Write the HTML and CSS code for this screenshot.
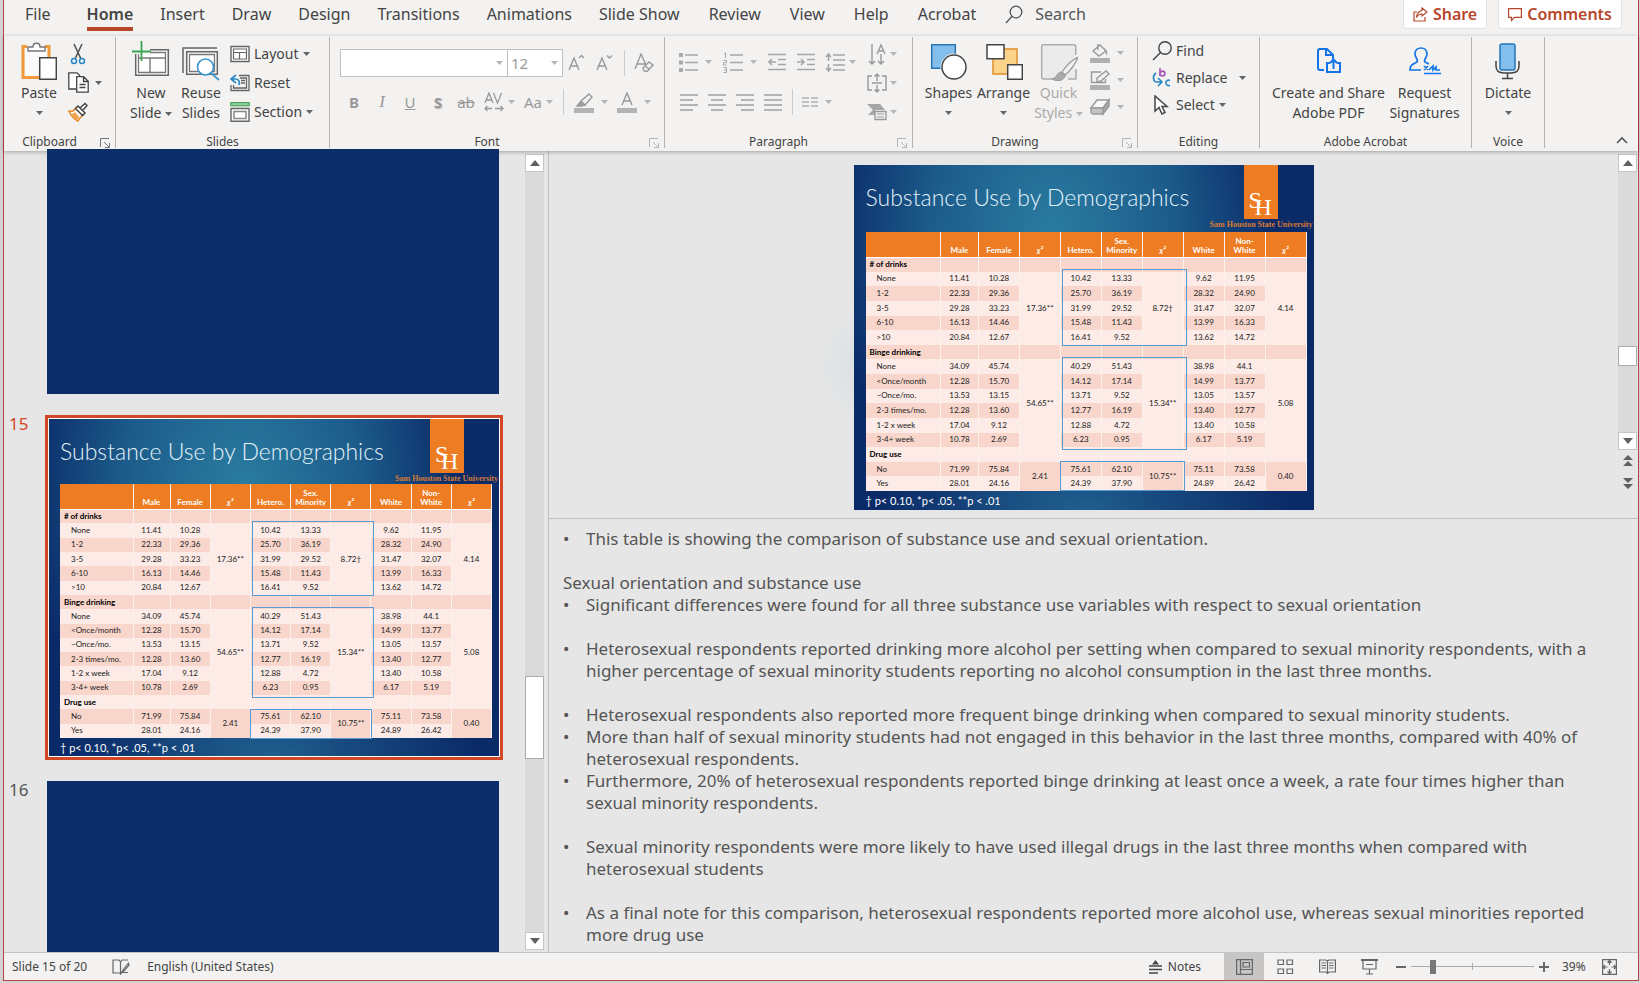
FILE: index.html
```html
<!DOCTYPE html>
<html lang="en">
<head>
<meta charset="utf-8">
<title>Presentation editor</title>
<link rel="stylesheet" href="styles.css">
</head>
<body>
<svg class="defs" aria-hidden="true">
  <symbol id="caret" viewBox="0 0 7 4"><path d="M0 0h7L3.500 4z" fill="currentColor"/></symbol>
  <symbol id="launch" viewBox="0 0 10 10"><path d="M.5 9V.5H9M4 4l5 5M9.500 5v4.500H5" fill="none" stroke="currentColor"/></symbol>
  <symbol id="up" viewBox="0 0 10 6"><path d="M0 6h10L5 0z" fill="#606060"/></symbol>
  <symbol id="down" viewBox="0 0 10 6"><path d="M0 0h10L5 6z" fill="#606060"/></symbol>
</svg>
<div class="app">
  <nav class="tabs">
    <a href="#" class="tab first">File</a>
    <a href="#" class="tab active">Home</a>
    <a href="#" class="tab">Insert</a>
    <a href="#" class="tab">Draw</a>
    <a href="#" class="tab">Design</a>
    <a href="#" class="tab">Transitions</a>
    <a href="#" class="tab">Animations</a>
    <a href="#" class="tab">Slide Show</a>
    <a href="#" class="tab">Review</a>
    <a href="#" class="tab">View</a>
    <a href="#" class="tab">Help</a>
    <a href="#" class="tab">Acrobat</a>
    <button class="search"><svg width="18" height="19" viewBox="0 0 18 19" fill="none" stroke="#555" stroke-width="1.300"><circle cx="11" cy="7" r="5.800"/><path d="M7 11.200L1 18"/></svg>Search</button>
    <span class="grow"></span>
    <button class="pill"><svg width="15" height="15" viewBox="0 0 15 15" fill="none" stroke="#b7472a" stroke-width="1.200"><path d="M4 5H1v9h11v-4M9 1l5 4-5 4V7C6 7 4.500 8.500 3.500 10.500 4 6.500 6 4 9 3.500z"/></svg>Share</button>
    <button class="pill"><svg width="14" height="15" viewBox="0 0 14 15" fill="none" stroke="#b7472a" stroke-width="1.200"><path d="M.6 1.600h12.800v8.800H6.500L3.500 13.500v-3.100H.6z"/></svg>Comments</button>
  </nav>

  <div class="ribbon">
    <section class="group g-clip">
      <div class="tools">
        <button class="big"><svg width="36" height="40" viewBox="0 0 36 40" fill="none"><path d="M6 5.500H2v31h17M24 5.500h4V16" stroke="#f0983a" stroke-width="3"/><path d="M4 7h22v9h-8v19H4z" fill="#fafafa"/><path d="M7 10V6h5c0-5 7-5 7 0h5v4z" fill="#fff" stroke="#777" stroke-width="1.400"/><path d="M18.700 16.700h16.600v21.600H18.700z" fill="#fff" stroke="#444" stroke-width="1.500"/></svg><span>Paste</span><svg class="caret"><use href="#caret"/></svg></button>
        <div class="col">
          <button class="tool" aria-label="Cut"><svg width="20" height="22" viewBox="0 0 20 22" fill="none"><path d="M6 1l7 15M14 1L7 16" stroke="#555" stroke-width="1.600"/><circle cx="6" cy="18" r="2.500" stroke="#2b88c8" stroke-width="1.500"/><circle cx="14" cy="18" r="2.500" stroke="#2b88c8" stroke-width="1.500"/></svg></button>
          <button class="tool" aria-label="Copy"><svg width="21" height="21" viewBox="0 0 21 21" fill="#fff" stroke="#444" stroke-width="1.300"><path d="M8 17H.8V.8H9l3 3"/><path d="M8.700 4.700h7l4.500 4.500v11H8.700zM15.500 5v4.500H20M11.500 12.500h6M11.500 15.500h6"/></svg><svg class="caret"><use href="#caret"/></svg></button>
          <button class="tool" aria-label="Format Painter"><svg width="20" height="20" viewBox="0 0 20 20"><path d="M1 9c3 1 5 0 7-3l7 7c-2 2-4 3-5 6-4-2-7-5-9-10z" fill="#fff" stroke="#e8862a" stroke-width="1.500"/><path d="M3 12c2 0 3-1 4-2l4 5-2 3z" fill="#f0a24a"/><path d="M7.500 6.500L10 4l7 7-2.500 2.500zM12 6l5-4.500L19 3.500l-4.500 5" fill="#fff" stroke="#444" stroke-width="1.500"/></svg></button>
        </div>
      </div>
      <h2 class="has-launch">Clipboard<button class="launch" aria-label="Clipboard options"><svg><use href="#launch"/></svg></button></h2>
    </section>

    <section class="group g-slides">
      <div class="tools">
        <button class="big"><svg width="40" height="40" viewBox="0 0 40 40" fill="none"><path d="M4.700 8.700h32.600v25.600H4.700z" fill="#fff" stroke="#666" stroke-width="1.500"/><path d="M7.500 11.500h27v20h-27z" stroke="#777" stroke-width="1.300"/><path d="M7 17h28M19 17v15" stroke="#777" stroke-width="1.400"/><path d="M0 4h19v9H0z" fill="#f3f2f1"/><path d="M10.500 0v20M1 10.500h19" stroke="#3aa655" stroke-width="1.800"/></svg><span>New<br>Slide <svg class="caret"><use href="#caret"/></svg></span></button>
        <button class="big"><svg width="40" height="40" viewBox="0 0 40 40" fill="none"><path d="M2 32V7h34" stroke="#666" stroke-width="1.500"/><path d="M5.700 10.700h30.600v22.600H5.700z" fill="#fff" stroke="#666" stroke-width="1.500"/><path d="M8.500 13.500h25v17h-25z" stroke="#777" stroke-width="1.300"/><circle cx="24.500" cy="26" r="8" fill="#fff" stroke="#3b97d0" stroke-width="1.600"/><path d="M30 32l8 7" stroke="#3b97d0" stroke-width="1.800"/></svg><span>Reuse<br>Slides</span></button>
        <div class="col list">
          <button class="row"><svg width="20" height="18" viewBox="0 0 20 18" fill="none" stroke="#666"><path d="M1 1.500h18v15H1z" fill="#fff" stroke-width="1.400"/><path d="M3.500 4h13v10h-13zM3.500 7.500h13M9.500 7.500V14" stroke-width="1.200"/></svg>Layout<svg class="caret"><use href="#caret"/></svg></button>
          <button class="row"><svg width="20" height="18" viewBox="0 0 20 18" fill="none"><path d="M9 1.500h10v15H1V11M10 4h6.500v10h-13v-3M11 6.500h4M11 9h4" stroke="#666" stroke-width="1.300"/><path d="M6 1L1 5l5 4M1 5h4c4 0 5 3 4 6" stroke="#2b88c8" stroke-width="1.700"/></svg>Reset</button>
          <button class="row"><svg width="20" height="20" viewBox="0 0 20 20" fill="none"><path d="M.6.600h18.800v3.200H.6z" fill="#8fd09c" stroke="#3a9b52"/><path d="M1 6.500h18v12.800H1z" fill="#fff" stroke="#666" stroke-width="1.400"/><path d="M4 9.500h12v7H4z" stroke="#888" stroke-width="1.500"/></svg>Section<svg class="caret"><use href="#caret"/></svg></button>
        </div>
      </div>
      <h2>Slides</h2>
    </section>

    <section class="group g-font off">
      <div class="tools stack">
        <div class="line">
          <label class="combo wide"><select aria-label="Font" disabled><option></option></select><svg class="caret"><use href="#caret"/></svg></label>
          <label class="combo"><select aria-label="Font size" disabled><option>12</option></select><svg class="caret"><use href="#caret"/></svg></label>
          <button class="ib" aria-label="Increase font size"><svg width="18" height="18" viewBox="0 0 18 18" fill="none" stroke="#999" stroke-width="1.400"><path d="M1 16L6 4l5 12M3 12h6M11 4l2.500-2.500L16 4"/></svg></button>
          <button class="ib" aria-label="Decrease font size"><svg width="18" height="18" viewBox="0 0 18 18" fill="none" stroke="#999" stroke-width="1.400"><path d="M1 16L6 4l5 12M3 12h6M11 1.500L13.500 4 16 1.500"/></svg></button>
          <i class="sep"></i>
          <button class="ib" aria-label="Clear formatting"><svg width="21" height="20" viewBox="0 0 21 20" fill="none" stroke="#999" stroke-width="1.400"><path d="M1 16L7 1l5 11M3 11h8"/><path d="M9 15l6-6 4 3-6 6.500-3-.5z"/><path d="M11 13l4 3"/></svg></button>
        </div>
        <div class="line chars">
          <button class="ib"><b>B</b></button>
          <button class="ib"><i class="serif">I</i></button>
          <button class="ib"><u>U</u></button>
          <button class="ib"><b class="shade">S</b></button>
          <button class="ib strike"><s>ab</s></button>
          <button class="ib pair" aria-label="Character spacing"><svg width="20" height="20" viewBox="0 0 20 20" fill="none" stroke="#999" stroke-width="1.300"><path d="M1 11L5 1l4 10M2.500 8h5M9.500 1l4 10 4-10M1 16.500h7M11 16.500h8M3.500 14L1 16.500 3.500 19M16.500 14l2.500 2.500-2.500 2.500"/></svg><svg class="caret"><use href="#caret"/></svg></button>
          <button class="ib pair">Aa<svg class="caret"><use href="#caret"/></svg></button>
          <i class="sep"></i>
          <button class="ib pair gap" aria-label="Highlight"><svg width="20" height="21" viewBox="0 0 20 21" fill="none"><path d="M0 16h20v5H0z" fill="#b3b3b3"/><path d="M7 9l8-7 3 3-7 8zM7 9l4 4-4 1H3z" stroke="#999" stroke-width="1.400"/><path d="M7 9l3 4-6 1z" fill="#999"/></svg><svg class="caret"><use href="#caret"/></svg></button>
          <button class="ib pair gap" aria-label="Font color"><svg width="20" height="21" viewBox="0 0 20 21" fill="none"><path d="M0 16h20v5H0z" fill="#b3b3b3"/><path d="M5 13l5-12 5 12M7 9h6" stroke="#999" stroke-width="1.400"/></svg><svg class="caret"><use href="#caret"/></svg></button>
        </div>
      </div>
      <h2 class="has-launch">Font<button class="launch" aria-label="Font options"><svg><use href="#launch"/></svg></button></h2>
    </section>

    <section class="group g-para off">
      <div class="tools">
        <div class="stack">
          <div class="line lists">
            <button class="ib pair gap" aria-label="Bullets"><svg width="19" height="19" viewBox="0 0 19 19"><path d="M0 0h4v4H0zM0 7.500h4v4H0zM0 15h4v4H0z" fill="#aaa"/><path d="M6 2h13M6 9.500h13M6 17h13" stroke="#a6a6a6" stroke-width="1.600"/></svg><svg class="caret"><use href="#caret"/></svg></button>
            <button class="ib pair gap" aria-label="Numbering"><svg width="20" height="21" viewBox="0 0 20 21" fill="none" stroke="#a6a6a6"><path d="M1 2l1.500-1v5M.5 8.500h3v2.200h-3v2.300h3M.5 15.500h3v5h-3M1 18h2.500"/><path d="M7 3h13M7 10.500h13M7 18h13" stroke-width="1.600"/></svg><svg class="caret"><use href="#caret"/></svg></button>
            <button class="ib" aria-label="Decrease indent"><svg width="18" height="18" viewBox="0 0 18 18" fill="none" stroke="#a6a6a6" stroke-width="1.600"><path d="M0 1.500h18M10 6.500h8M10 11.500h8M0 16.500h18M1 9h7M4 6L1 9l3 3"/></svg></button>
            <button class="ib" aria-label="Increase indent"><svg width="18" height="18" viewBox="0 0 18 18" fill="none" stroke="#a6a6a6" stroke-width="1.600"><path d="M0 1.500h18M10 6.500h8M10 11.500h8M0 16.500h18M0 9h7M4 6l3 3-3 3"/></svg></button>
            <button class="ib pair" aria-label="Line spacing"><svg width="20" height="19" viewBox="0 0 20 19" fill="none" stroke="#a6a6a6" stroke-width="1.600"><path d="M8 2h12M8 7h12M8 12h12M8 17h12M3.500 1v7M1 4l2.500-3L6 4M3.500 11v7M1 15l2.500 3L6 15"/></svg><svg class="caret"><use href="#caret"/></svg></button>
          </div>
          <div class="line">
            <button class="ib al" aria-label="Align left"><svg width="18" height="17" viewBox="0 0 18 17" stroke="#a0a0a0" stroke-width="1.600"><path d="M0 1h18M0 6h13M0 11h18M0 16h13"/></svg></button>
            <button class="ib al" aria-label="Center"><svg width="18" height="17" viewBox="0 0 18 17" stroke="#a0a0a0" stroke-width="1.600"><path d="M0 1h18M3 6h12M0 11h18M3 16h12"/></svg></button>
            <button class="ib al" aria-label="Align right"><svg width="18" height="17" viewBox="0 0 18 17" stroke="#a0a0a0" stroke-width="1.600"><path d="M0 1h18M5 6h13M0 11h18M5 16h13"/></svg></button>
            <button class="ib al" aria-label="Justify"><svg width="18" height="17" viewBox="0 0 18 17" stroke="#a0a0a0" stroke-width="1.600"><path d="M0 1h18M0 6h18M0 11h18M0 16h18"/></svg></button>
            <i class="sep"></i>
            <button class="ib pair gap" aria-label="Columns"><svg width="16" height="10" viewBox="0 0 16 10" stroke="#b0b0b0" stroke-width="1.400"><path d="M0 1h7M9 1h7M0 5h7M9 5h7M0 9h7M9 9h7"/></svg><svg class="caret"><use href="#caret"/></svg></button>
          </div>
        </div>
        <div class="col side">
          <button class="tool" aria-label="Text direction"><svg width="20" height="22" viewBox="0 0 20 22" fill="none" stroke="#999" stroke-width="1.400"><path d="M5 1v20M2 18l3 3 3-3M14 11v10M11 18l3 3 3-3M10 11l4-9 4 9M11.500 8h5"/></svg><svg class="caret"><use href="#caret"/></svg></button>
          <button class="tool" aria-label="Align text"><svg width="20" height="20" viewBox="0 0 20 20" fill="none" stroke="#999" stroke-width="1.400"><path d="M5 3H1v14h4M15 3h4v14h-4M5 10h10M10 1v7M7.500 3.500L10 1l2.500 2.500M10 12v7M7.500 16.500L10 19l2.500-2.500"/></svg><svg class="caret"><use href="#caret"/></svg></button>
          <button class="tool" aria-label="Convert to SmartArt"><svg width="20" height="18" viewBox="0 0 20 18"><path d="M0 1h13l5 6H8v5H1l5-5z" fill="#a6a6a6"/><path d="M8 8.500h11v8H8z" fill="#f3f2f1" stroke="#999" stroke-width="1.400"/><path d="M10 11h7M10 14h7" stroke="#999"/></svg><svg class="caret"><use href="#caret"/></svg></button>
        </div>
      </div>
      <h2 class="has-launch">Paragraph<button class="launch" aria-label="Paragraph options"><svg><use href="#launch"/></svg></button></h2>
    </section>

    <section class="group g-draw">
      <div class="tools">
        <button class="big"><svg width="38" height="40" viewBox="0 0 38 40"><path d="M1.700 3.700h23.600v23.600H1.700z" fill="#83beec" stroke="#2675b5" stroke-width="1.500"/><circle cx="24" cy="26" r="13.500" fill="#f3f2f1"/><circle cx="24" cy="26" r="12" fill="#fff" stroke="#444" stroke-width="1.500"/></svg><span>Shapes</span><svg class="caret"><use href="#caret"/></svg></button>
        <button class="big"><svg width="38" height="40" viewBox="0 0 38 40" stroke-width="1.500"><path d="M8 8h24v25H8z" fill="#fbd38b" stroke="#e0902c"/><path d="M2 3.700h17v14H2zM22.700 23.700h14.600v14.600H22.700z" fill="#fff" stroke="#444"/></svg><span>Arrange</span><svg class="caret"><use href="#caret"/></svg></button>
        <button class="big off"><svg width="38" height="40" viewBox="0 0 38 40" fill="none"><path d="M2.500 4.500h32.500v33H2.500z" fill="#ebebeb"/><path d="M20 38H3.700q-2 0-2-2V5.700q0-2 2-2h30q2 0 2 2V14M36 28v10h-8" stroke="#aaa" stroke-width="1.500"/><path d="M38 16c-6 3-12 9-16 15l3 3c6-5 10-10 13-18z" fill="#f3f2f1" stroke="#999" stroke-width="1.300"/><path d="M21 31c-4 0-4 6-9 7 5 3 13 2 13-4z" fill="#aaa" stroke="#999"/></svg><span>Quick<br>Styles <svg class="caret"><use href="#caret"/></svg></span></button>
        <div class="col off drawcol">
          <button class="tool" aria-label="Shape fill"><svg width="20" height="20" viewBox="0 0 20 20" fill="none"><path d="M0 15h20v5H0z" fill="#b0b0b0"/><path d="M3 8l7-6 6 6-7 5zM8 1v6" stroke="#999" stroke-width="1.400"/><path d="M14 5c3 2 4 5 3 8l-2-5z" fill="#999"/></svg><svg class="caret"><use href="#caret"/></svg></button>
          <button class="tool" aria-label="Shape outline"><svg width="20" height="20" viewBox="0 0 20 20" fill="none"><path d="M0 15h20v5H0z" fill="#b0b0b0"/><path d="M11 2H1.500v10.500h14V9M7 8l9-7 3 3-8 7-4 1z" stroke="#999" stroke-width="1.400"/></svg><svg class="caret"><use href="#caret"/></svg></button>
          <button class="tool" aria-label="Shape effects"><svg width="20" height="18" viewBox="0 0 20 18" stroke="#999" stroke-width="1.400"><path d="M1 10L7 2h12l-6 8z" fill="#f8f8f8"/><path d="M1 10h12v6H3c-1 0-2-1-2-2z" fill="#c4c4c4"/><path d="M13 10l6-8v6l-6 8z" fill="#aaa"/></svg><svg class="caret"><use href="#caret"/></svg></button>
        </div>
      </div>
      <h2 class="has-launch">Drawing<button class="launch dim" aria-label="Drawing options"><svg><use href="#launch"/></svg></button></h2>
    </section>

    <section class="group g-edit">
      <div class="tools">
        <div class="col list tight">
          <button class="row"><svg width="20" height="20" viewBox="0 0 20 20" fill="none" stroke="#444" stroke-width="1.400"><circle cx="13" cy="7" r="6.200"/><path d="M8.500 11.500L1 19"/></svg>Find</button>
          <button class="row"><svg width="20" height="21" viewBox="0 0 20 21" fill="none" stroke-width="1.600"><path d="M8 1v8" stroke="#a457b8"/><circle cx="10.500" cy="6.500" r="2.400" stroke="#a457b8"/><path d="M18 13.500c-5-2-6 6 0 5" stroke="#2b88c8"/><path d="M4 6c-4 3-3 9 1 9h4M6 11l4 4-4 4" stroke="#2b88c8"/></svg>Replace<svg class="caret far"><use href="#caret"/></svg></button>
          <button class="row"><svg width="20" height="20" viewBox="0 0 20 20" fill="#fff" stroke="#444" stroke-width="1.500"><path d="M3 1v15l4-3.500 3 6.500 3-1.500-3-6h5z"/></svg>Select<svg class="caret"><use href="#caret"/></svg></button>
        </div>
      </div>
      <h2>Editing</h2>
    </section>

    <section class="group g-adobe">
      <div class="tools">
        <button class="big"><svg width="26" height="40" viewBox="0 0 26 40" fill="none" stroke="#1473e6" stroke-width="2"><path d="M8 29H4q-2 0-2-2V10q0-2 2-2h7l6 6v4M10 8v6h7M14 22h-3v9h13v-9h-3M17.500 28v-9M14 22l3.500-3.500L21 22"/></svg><span>Create and Share<br>Adobe PDF</span></button>
        <button class="big"><svg width="32" height="40" viewBox="0 0 32 40" fill="none" stroke="#1473e6" stroke-width="1.700"><path d="M12 29H1c0-5 3-6 7-8 2-2-2-4-2-8 0-8 12-8 12 0 0 4-4 6-2 8l4 2M15 25l4 4m0-4l-4 4M20 29l4-4v4l3-3v3h4M15 32.500h17"/></svg><span>Request<br>Signatures</span></button>
      </div>
      <h2>Adobe Acrobat</h2>
    </section>

    <section class="group g-voice">
      <div class="tools">
        <button class="big"><svg width="26" height="40" viewBox="0 0 26 40" fill="none"><rect x="5" y="3" width="15" height="26" rx="2" fill="#83beec" stroke="#2675b5" stroke-width="1.500"/><path d="M1 20v5c0 5 3 7 8 7h7c5 0 8-2 8-7v-5M12.500 32v5M7 37.500h11" stroke="#444" stroke-width="1.500"/></svg><span>Dictate</span><svg class="caret"><use href="#caret"/></svg></button>
      </div>
      <h2>Voice</h2>
    </section>
    <button class="collapse" aria-label="Collapse ribbon"><svg width="12" height="8" viewBox="0 0 12 8" fill="none" stroke="#555" stroke-width="1.600"><path d="M1 7l5-5 5 5"/></svg></button>
  </div>

  <main class="work">
    <aside class="sidebar">
      <ol class="thumbs">
        <li><span class="num"></span><div class="blank"></div></li>
        <li class="current"><span class="num">15</span><div class="frame"><div class="slide small"></div></div></li>
        <li class="last"><span class="num">16</span><div class="blank"></div></li>
      </ol>
      <div class="scroll">
        <button aria-label="Scroll up"><svg><use href="#up"/></svg></button>
        <div class="track"><div class="handle left"></div></div>
        <button aria-label="Scroll down"><svg><use href="#down"/></svg></button>
      </div>
    </aside>
    <section class="editor">
      <div class="stage">
        <div class="canvas"><div class="slide large"></div></div>
        <div class="rail">
          <div class="scroll">
            <button aria-label="Scroll up"><svg><use href="#up"/></svg></button>
            <div class="track"><div class="handle right"></div></div>
            <button aria-label="Scroll down"><svg><use href="#down"/></svg></button>
          </div>
          <button class="step" aria-label="Previous slide"><svg width="10" height="12" viewBox="0 0 10 12" fill="#606060"><path d="M0 5h10L5 0zM0 11h10L5 6z"/></svg></button>
          <button class="step" aria-label="Next slide"><svg width="10" height="12" viewBox="0 0 10 12" fill="#606060"><path d="M0 1h10L5 6zM0 7h10l-5 5z"/></svg></button>
        </div>
      </div>
      <div class="notes">
        <p class="pt end"><span>•</span>This table is showing the comparison of substance use and sexual orientation.</p>
        <p>Sexual orientation and substance use</p>
        <p class="pt end"><span>•</span>Significant differences were found for all three substance use variables with respect to sexual orientation</p>
        <p class="pt end"><span>•</span>Heterosexual respondents reported drinking more alcohol per setting when compared to sexual minority respondents, with a higher percentage of sexual minority students reporting no alcohol consumption in the last three months.</p>
        <p class="pt"><span>•</span>Heterosexual respondents also reported more frequent binge drinking when compared to sexual minority students.</p>
        <p class="pt"><span>•</span>More than half of sexual minority students had not engaged in this behavior in the last three months, compared with 40% of heterosexual respondents.</p>
        <p class="pt end"><span>•</span>Furthermore, 20% of heterosexual respondents reported binge drinking at least once a week, a rate four times higher than sexual minority respondents.</p>
        <p class="pt end"><span>•</span>Sexual minority respondents were more likely to have used illegal drugs in the last three months when compared with heterosexual students</p>
        <p class="pt"><span>•</span>As a final note for this comparison, heterosexual respondents reported more alcohol use, whereas sexual minorities reported more drug use</p>
      </div>
    </section>
  </main>

  <footer class="status">
    <span>Slide 15 of 20</span>
    <button class="proof" aria-label="Spelling"><svg width="18" height="16" viewBox="0 0 18 16" fill="none" stroke="#666" stroke-width="1.200"><path d="M8 14H1V1h6l1.500 2V15L10 13.500h6M8.500 3L10 1h6M16.500 4L11 11l-1 2 2-1 5-6z"/></svg></button>
    <span>English (United States)</span>
    <span class="grow"></span>
    <button class="notebtn"><svg width="13" height="14" viewBox="0 0 13 14"><path d="M3 4.500h7L6.500 0z" fill="#444"/><path d="M0 6h13M0 9.500h13M0 13h9" stroke="#444" stroke-width="1.300"/></svg>Notes</button>
    <button class="view on" aria-label="Normal"><svg width="17" height="16" viewBox="0 0 17 16" fill="none" stroke="#666" stroke-width="1.200"><path d="M.6.600h15.800v14.800H.6zM4.500 1v14M4.500 10.500H16M7 3.500h6.500v4.500H7z"/></svg></button>
    <button class="view" aria-label="Slide sorter"><svg width="17" height="16" viewBox="0 0 17 16" fill="none" stroke="#666" stroke-width="1.200"><path d="M1 1h5.500v4.500H1zM10 1h5.500v4.500H10zM1 10h5.500v4.500H1zM10 10h5.500v4.500H10z"/></svg></button>
    <button class="view" aria-label="Reading view"><svg width="17" height="16" viewBox="0 0 17 16" fill="none" stroke="#666" stroke-width="1.200"><path d="M8.500 2L7 1H.6v12H7l1.500 1.500L10 13h6.400V1H10zv12M2.500 4H7M2.500 6.500H7M2.500 9H7M10 4h4.500M10 6.500h4.500M10 9h4.500M8.500 2v12"/></svg></button>
    <button class="view" aria-label="Slide show"><svg width="17" height="16" viewBox="0 0 17 16" fill="none" stroke="#666" stroke-width="1.200"><path d="M0 1h17" stroke-width="2"/><path d="M2 2v8h13V2M5 5.500h7M8.500 10v5M5 15h7"/></svg></button>
    <button class="zoomer" aria-label="Zoom out"><svg width="10" height="10" viewBox="0 0 10 10"><path d="M0 5h10" stroke="#666" stroke-width="2"/></svg></button>
    <input type="range" aria-label="Zoom" min="10" max="190" value="39">
    <button class="zoomer" aria-label="Zoom in"><svg width="10" height="10" viewBox="0 0 10 10"><path d="M0 5h10M5 0v10" stroke="#666" stroke-width="2"/></svg></button>
    <span class="pct">39%</span>
    <button class="fit" aria-label="Fit slide"><svg width="15" height="16" viewBox="0 0 15 16" fill="none" stroke="#666" stroke-width="1.200"><path d="M.6.600h13.800v14.800H.6zM7.500 1v5M5.500 3.500L7.500 1.500l2 2M7.500 15v-5M5.500 12.500l2 2 2-2M1 8h4.500M3 6L1 8l2 2M14 8H9.500M12 6l2 2-2 2"/></svg></button>
  </footer>
</div>
<script src="slide.js"></script>
</body>
</html>
```
FILE: slide.js
```js
// Rows: label, male, female, hetero, sexual minority, white, non-white.
const sections = [
  { title: '# of drinks', chi: ['17.36**', '8.72†', '4.14'], rows: [
    ['None', '11.41', '10.28', '10.42', '13.33', '9.62', '11.95'],
    ['1-2', '22.33', '29.36', '25.70', '36.19', '28.32', '24.90'],
    ['3-5', '29.28', '33.23', '31.99', '29.52', '31.47', '32.07'],
    ['6-10', '16.13', '14.46', '15.48', '11.43', '13.99', '16.33'],
    ['>10', '20.84', '12.67', '16.41', '9.52', '13.62', '14.72']] },
  { title: 'Binge drinking', chi: ['54.65**', '15.34**', '5.08'], rows: [
    ['None', '34.09', '45.74', '40.29', '51.43', '38.98', '44.1'],
    ['<Once/month', '12.28', '15.70', '14.12', '17.14', '14.99', '13.77'],
    ['~Once/mo.', '13.53', '13.15', '13.71', '9.52', '13.05', '13.57'],
    ['2-3 times/mo.', '12.28', '13.60', '12.77', '16.19', '13.40', '12.77'],
    ['1-2 x week', '17.04', '9.12', '12.88', '4.72', '13.40', '10.58'],
    ['3-4+ week', '10.78', '2.69', '6.23', '0.95', '6.17', '5.19']] },
  { title: 'Drug use', chi: ['2.41', '10.75**', '0.40'], rows: [
    ['No', '71.99', '75.84', '75.61', '62.10', '75.11', '73.58'],
    ['Yes', '28.01', '24.16', '24.39', '37.90', '24.89', '26.42']] }
];
const esc = t => t.replace('<', '&lt;').replace('>', '&gt;');
const heads = ['', 'Male', 'Female', '<i>χ²</i>', 'Hetero.', 'Sex.<br>Minority', '<i>χ²</i>', 'White', 'Non-<br>White', '<i>χ²</i>'];

let body = '';
let index = 0;
for (const s of sections) {
  const shade = () => (index++ % 2 ? 'pale' : 'pink');
  body += `<tr class="${shade()}"><th scope="row">${s.title}</th>${'<td></td>'.repeat(9)}</tr>`;
  s.rows.forEach((r, n) => {
    const chi = k => (n ? '' : `<td rowspan="${s.rows.length}">${s.chi[k]}</td>`);
    const td = k => `<td>${r[k]}</td>`;
    body += `<tr class="${shade()}"><td class="name">${esc(r[0])}</td>${td(1)}${td(2)}${chi(0)}${td(3)}${td(4)}${chi(1)}${td(5)}${td(6)}${chi(2)}</tr>`;
  });
}
const markup = `
  <div class="title">Substance Use by Demographics</div>
  <div class="logo"><span class="s">S</span><span class="h">H</span></div>
  <div class="school">Sam Houston State University</div>
  <table><colgroup><col class="c0"><col class="c1"></colgroup>
    <thead><tr>${heads.map(h => `<th>${h}</th>`).join('')}</tr></thead>
    <tbody>${body}</tbody></table>
  <div class="mark m1"></div><div class="mark m2"></div><div class="mark m3"></div>
  <div class="foot">† p&lt; 0.10, *p&lt; .05, **p &lt; .01</div>`;
document.querySelectorAll('.slide').forEach(el => { el.innerHTML = markup; });
```
FILE: styles.css
```css
* { box-sizing: border-box; }
body {
  margin: 0;
  height: 100vh;
  padding: 0 1px 2px 3px;
  background: #d6d2d1;
  font: 15px/20px "Noto Sans", "Open Sans", sans-serif;
  color: #444;
  overflow: hidden;
}
.defs { position: absolute; width: 0; height: 0; }
button { border: 0; padding: 0; background: none; font: inherit; color: inherit; }
svg { flex: none; display: block; }
.grow { flex: 1; }
.app {
  height: 100%;
  display: flex;
  flex-direction: column;
  border: 1px solid #b8434a;
  border-top: 0;
  background: #e6e6e6;
}

/* Tabs */
.tabs { display: flex; align-items: flex-start; height: 36px; background: #f3f2f1; padding-right: 16px; font-size: 16px; white-space: nowrap; }
.tab { color: inherit; text-decoration: none; margin-right: 27px; padding-top: 4px; height: 31px; }
.tab:nth-child(n+8) { margin-right: 29px; }
.tab.first { margin: 0 36px 0 21px; }
.tab.active { font-weight: 600; border-bottom: 4px solid #b7472a; }
.search { display: flex; gap: 12px; align-items: center; padding-top: 4px; color: #555; }
.pill { display: flex; align-items: center; gap: 5px; height: 29px; margin-left: 11px; padding: 0 9px; background: #fff; border: 1px solid #e4e2e0; border-top: 0; border-radius: 0 0 4px 4px; color: #b7472a; font-weight: 600; }

/* Ribbon */
.ribbon { position: relative; display: flex; height: 115px; background: #f3f2f1; padding: 1px 0 3px; box-shadow: 0 1px 4px rgba(0, 0, 0, .3); }
.group { display: flex; flex-direction: column; border-right: 1px solid #b5b3b1; }
.group h2 { position: relative; margin: 0; font-size: 12px; line-height: 12px; font-weight: 400; text-align: center; color: #444; }
.group .has-launch { padding-right: 20px; }
.launch { position: absolute; right: 5px; top: 2px; }
.launch svg { width: 10px; height: 10px; color: #777; }
.off .launch svg, .launch.dim svg { color: #b5b5b5; }
.tools { flex: 1; display: flex; align-items: flex-start; padding-top: 2px; }
.g-clip { width: 112px; }
.g-slides { width: 214px; }
.g-font { width: 335px; }
.g-para { width: 248px; }
.g-draw { width: 225px; }
.g-edit { width: 122px; }
.g-adobe { width: 212px; }
.g-voice { width: 73px; }
.big { display: flex; flex-direction: column; align-items: center; width: 50px; white-space: nowrap; padding-top: 2px; font-size: 14px; }
.big > span { margin-top: 2px; }
.big > .caret { margin-top: 8px; }
.caret { width: 7px; height: 4px; color: #666; }
span > .caret { display: inline-block; vertical-align: 2px; }
.off .caret { color: #b5b5b5; }
.off { color: #999; }
.big.off { color: #aaa; }
.col { display: flex; flex-direction: column; }
.tool { display: flex; align-items: center; gap: 3px; height: 29px; }
.row { display: flex; align-items: center; gap: 4px; height: 29px; font-size: 14px; }
.tight .row { height: 27px; }
.row .far { margin-left: 8px; }
.g-clip .big { margin: 0 2px 0 8px; width: 54px; }
.g-clip .tool { gap: 6px; }
.g-slides .tools { padding-left: 10px; }
.g-slides .list { margin-left: 4px; }
.g-draw .tools { padding-left: 8px; }
.g-draw .big { width: 55px; }
.drawcol { margin-left: 4px; }
.drawcol .tool { height: 27px; gap: 7px; }
.g-edit .tools { padding: 2px 0 0 14px; }
.g-edit .list { margin-top: -2px; }
.g-adobe .tools { padding-left: 10px; }
.g-adobe .big { width: 117px; }
.g-adobe .big + .big { width: 75px; }
.g-voice .big { width: 72px; }
.stack { display: flex; flex-direction: column; align-items: flex-start; }
.line { display: flex; align-items: center; height: 40px; }
.g-font .tools { padding: 6px 0 0 10px; }
.g-font .chars { height: 38px; }
.combo { display: flex; align-items: center; width: 56px; height: 28px; background: #fff; border: 1px solid #c0c0c0; margin-left: -1px; padding-right: 4px; }
.combo.wide { width: 168px; margin-left: 0; }
.combo select { appearance: none; flex: 1; min-width: 0; border: 0; background: none; padding: 0 3px; font: inherit; color: #999; opacity: 1; }
.ib { display: flex; align-items: center; justify-content: center; width: 28px; height: 24px; font-size: 15px; color: #999; }
.ib.pair { width: 39px; gap: 4px; }
.ib.pair.gap { width: 43px; gap: 7px; }
.serif { font-family: "Liberation Serif", serif; font-size: 17px; }
.shade { text-shadow: 1px 1px 1px #bbb; }
.sep { width: 1px; height: 26px; background: #ccc; margin: 0 5px; }
.g-para .tools { padding-left: 10px; }
.g-para .stack { padding-top: 3px; width: 192px; }
.g-para .stack .pair.gap { justify-content: flex-start; padding-left: 4px; }
.g-para .lists { gap: 1px; }
.collapse { position: absolute; right: 10px; bottom: 7px; }

/* Workspace */
.work { flex: 1; min-height: 0; display: flex; }
.sidebar { display: flex; width: 545px; padding-right: 4px; border-right: 1px solid #c0c0c0; }
.thumbs { flex: 1; display: flex; flex-direction: column; gap: 21px; margin: -2px 0 0; padding: 0; list-style: none; position: relative; }
.thumbs li { display: flex; }
.thumbs .num { width: 41px; padding-left: 5px; font-size: 17px; line-height: 17px; color: #555; }
.thumbs .current .num { color: #d24726; }
.thumbs .last { flex: 1; }
.blank { width: 452px; height: 245px; margin-left: 2px; background: #0b2d69; }
.last .blank { height: auto; }
.frame { padding: 1px; border: 3px solid #d24726; background: #fff; margin-right: 2px; }
.scroll { display: flex; flex-direction: column; width: 19px; margin: 3px 0 2px; }
.scroll button { display: grid; place-items: center; height: 18px; background: #fff; border: 1px solid #c6c6c6; }
.scroll button svg { width: 10px; height: 6px; }
.track { flex: 1; background: #dadada; display: flex; flex-direction: column; }
.handle { background: #fff; border: 1px solid #ababab; }
.handle.left { height: 83px; margin-top: 504px; }
.handle.right { height: 20px; margin-top: 174px; }
.editor { flex: 1; min-width: 0; display: flex; flex-direction: column; }
.stage { display: flex; height: 368px; border-bottom: 1px solid #c0c0c0; }
.canvas { flex: 1; display: flex; justify-content: center; align-items: flex-start; padding-top: 14px; background: radial-gradient(ellipse 40px 60px at 305px 215px, #dce1e5, #e6e6e6); }
.rail { display: flex; flex-direction: column; width: 20px; }
.rail .scroll { height: 296px; margin-bottom: 0; }
.step { display: grid; place-items: center; height: 22px; }

/* Slide */
.slide {
  position: relative;
  overflow: hidden;
  color: #fff;
  font-family: Lato, sans-serif;
  background:
    radial-gradient(ellipse 45% 22% at 50% 100%, rgba(36, 105, 150, .8), rgba(36, 105, 150, 0)),
    radial-gradient(ellipse 48% 85% at 43% 22%, #2b7da1, #1c5c8b 55%, #0b2b68 100%);
}
.slide.small { width: 450px; height: 337px; padding: 0 7px 0 11px; }
.slide.large { width: 460px; height: 345px; padding: 0 7px 0 12px; }
.title { height: 65px; padding-top: 17px; font-size: 23px; line-height: 30px; font-weight: 300; white-space: nowrap; color: #e4f2fa; }
.large .title { height: 67px; }
.logo { position: absolute; top: 0; right: 35px; width: 34px; height: 54px; background: #ee7c22; font: 24px/24px "Liberation Serif", serif; }
.large .logo { right: 36px; }
.logo span { position: absolute; }
.logo .s { left: 5px; top: 23px; }
.logo .h { left: 11px; top: 30px; }
.school { position: absolute; right: 1px; top: 55px; font: bold 8px/10px "Liberation Serif", serif; color: #d57a35; white-space: nowrap; }
.slide table { width: 100%; height: 254px; table-layout: fixed; border-collapse: collapse; color: #222; font-size: 8px; line-height: 9px; }
.large table { height: 259px; }
.c0 { width: 73px; }
.c1 { width: 37px; }
.large .c0 { width: 75px; }
.large .c1 { width: 38px; }
.slide th, .slide td { padding: 0; text-align: center; border: solid #fdf1ec; border-width: 0 1px 0 0; height: 14px; }
.slide thead th { height: 25px; padding-bottom: 2px; background: #ee7c22; color: #fff; vertical-align: bottom; border-bottom: 1px solid #fff; }
.slide tbody th { text-align: left; padding-left: 4px; color: #000; white-space: nowrap; }
.slide .name { text-align: left; padding-left: 11px; white-space: nowrap; }
.pink > * { background: #f9d6cc; }
.pale > *, .slide td[rowspan="5"], .slide td[rowspan="6"] { background: #fcebe6; }
.mark { position: absolute; border: 1px solid #5b9bd5; }
.small .m1 { left: 203px; top: 102px; width: 122px; height: 75px; }
.small .m2 { left: 203px; top: 188px; width: 122px; height: 91px; }
.small .m3 { left: 201px; top: 290px; width: 122px; height: 30px; }
.large .m1 { left: 208px; top: 104px; width: 125px; height: 77px; }
.large .m2 { left: 208px; top: 192px; width: 125px; height: 93px; }
.large .m3 { left: 206px; top: 296px; width: 125px; height: 30px; }
.foot { font-size: 11px; line-height: 19px; }

/* Notes */
.notes { flex: 1; padding: 9px 34px 0 14px; font-size: 17px; line-height: 22px; color: #555; overflow: hidden; }
.notes p { margin: 0; }
.notes .pt { position: relative; padding-left: 23px; }
.notes .pt span { position: absolute; left: 0; }
.notes .end { margin-bottom: 22px; }

/* Status bar */
.status { display: flex; align-items: center; height: 28px; background: #f3f2f1; border-top: 1px solid #c4c4c4; padding: 0 21px 0 8px; font-size: 12px; }
.proof { margin: 0 17px 0 25px; }
.notebtn { display: flex; gap: 6px; align-items: center; margin-right: 23px; }
.view { display: grid; place-items: center; width: 42px; height: 27px; }
.view.on { width: 40px; background: #c8c6c4; }
.zoomer { margin-left: 6px; }
.status input { appearance: none; width: 123px; height: 14px; margin: 0 0 0 5px; background: linear-gradient(#aaa, #aaa) center / 100% 1px no-repeat, linear-gradient(#aaa, #aaa) center / 1px 7px no-repeat; }
.status input::-webkit-slider-thumb { appearance: none; width: 6px; height: 14px; background: #777; }
.status input + .zoomer { margin-left: 5px; }
.pct { margin-left: 13px; width: 40px; }
```
